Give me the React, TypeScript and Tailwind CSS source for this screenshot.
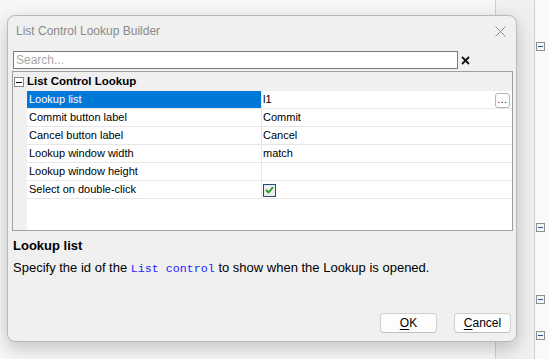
import React from "react";

const rows: { name: string; value?: string; kind?: "check" | "ellipsis" }[] = [
  { name: "Lookup list", value: "l1", kind: "ellipsis" },
  { name: "Commit button label", value: "Commit" },
  { name: "Cancel button label", value: "Cancel" },
  { name: "Lookup window width", value: "match" },
  { name: "Lookup window height", value: "" },
  { name: "Select on double-click", kind: "check" },
];

function TreeMinus({ className }: { className: string }) {
  return (
    <div className={`w-[9px] h-[9px] border border-[#8e8e8e] bg-[#f4f4f4] flex items-center justify-center ${className}`}>
      <div className="w-[5px] h-[1px] bg-[#2f4fa8]" />
    </div>
  );
}

export default function App() {
  return (
    <div className="relative w-[549px] h-[359px] overflow-hidden bg-[#f7f7f7] font-['Liberation_Sans',Arial,sans-serif]">
      {/* background app */}
      <div className="flex h-full">
        <div className="w-[495px] bg-[#f7f7f7]" />
        <div className="w-[40px] border-l border-r border-[#cfcfcf] bg-[#f0f0f0]" />
        <div className="flex-1 bg-[#f9f9f9] flex flex-col pl-[1px]">
          <TreeMinus className="mt-[42px]" />
          <TreeMinus className="mt-[172px]" />
          <TreeMinus className="mt-[63px]" />
          <TreeMinus className="mt-[27px]" />
        </div>
      </div>

      {/* dialog */}
      <div className="absolute left-[7px] top-[15px] w-[510px] h-[327px] rounded-[8px] border border-[#b9b9b9] bg-[#f0f0f0] shadow-[0_6px_18px_rgba(0,0,0,0.22)] flex flex-col">
        <div className="h-[30px] flex items-center justify-between pl-[8px] pr-[10px]">
          <span className="text-[12px] text-[#8a8a8a] leading-none">List Control Lookup Builder</span>
          <svg width="11" height="11" viewBox="0 0 11 11">
            <path d="M0.5 0.5 L10.5 10.5 M10.5 0.5 L0.5 10.5" stroke="#8c8c8c" strokeWidth="1" fill="none" />
          </svg>
        </div>

        {/* search */}
        <div className="mt-[5px] pl-[5px] flex items-center">
          <div className="w-[445px] h-[18px] border border-[#7a7a7a] bg-white flex items-center pl-[2px]">
            <span className="text-[12px] text-[#a8a8a8] leading-none">Search...</span>
          </div>
          <svg className="ml-[3px]" width="9" height="9" viewBox="0 0 9 9">
            <path d="M1 1 L8 8 M8 1 L1 8" stroke="#111" strokeWidth="1.8" fill="none" />
          </svg>
        </div>

        {/* property grid */}
        <div className="mt-[2px] ml-[4px] w-[501px] h-[160px] border border-[#a0a0a0] bg-white flex flex-col">
          <div className="h-[19px] bg-[#f0f0f0] flex items-center pl-[1px] shrink-0">
            <div className="w-[10px] h-[10px] border border-[#8a8a8a] bg-white flex items-center justify-center mt-[1px]">
              <div className="w-[6px] h-[1px] bg-black" />
            </div>
            <span className="ml-[3px] text-[11.5px] font-bold text-black leading-none">List Control Lookup</span>
          </div>
          <div className="flex flex-1">
            <div className="w-[14px] bg-[#f0f0f0]" />
            <div className="flex-1 flex flex-col">
              {rows.map((r, i) => (
                <div key={r.name} className="h-[18px] flex border-b border-[#e6e6e6]">
                  <div
                    className={`w-[234px] pl-[2px] flex items-center text-[11px] leading-none ${
                      i === 0 ? "bg-[#0078d7] text-white" : "text-black"
                    }`}
                  >
                    {r.name}
                  </div>
                  <div className="w-[1px] bg-[#e6e6e6]" />
                  <div className="flex-1 flex items-center justify-between pl-[1px] pr-[2px] text-[11px] leading-none text-black">
                    {r.kind === "check" ? (
                      <div className="w-[13px] h-[13px] border border-[#1c4f7a] bg-[#ececec] flex items-center justify-center mt-[1px]">
                        <svg width="9" height="8" viewBox="0 0 9 8">
                          <path d="M1 4 L3.5 6.5 L8 1.2" stroke="#1f9e2a" strokeWidth="1.8" fill="none" />
                        </svg>
                      </div>
                    ) : (
                      <span>{r.value}</span>
                    )}
                    {r.kind === "ellipsis" && (
                      <div className="w-[15px] h-[15px] mt-[2px] rounded-[3px] border border-[#b5b5b5] bg-white flex items-center justify-center text-[10px] leading-none tracking-[0.5px] text-black pb-[2px]">
                        ...
                      </div>
                    )}
                  </div>
                </div>
              ))}
            </div>
          </div>
        </div>

        {/* description */}
        <div className="ml-[5px] mt-[7px] h-[16px] text-[13px] font-bold leading-[16px] text-black">Lookup list</div>
        <div className="ml-[5px] mt-[6px] h-[16px] text-[13px] leading-[16px] text-black whitespace-nowrap">
          Specify the id of the{" "}
          <span className="font-['Liberation_Mono',monospace] text-[11.67px] text-[#2424ff]">List control</span>{" "}
          to show when the Lookup is opened.
        </div>

        {/* buttons */}
        <div className="mt-auto mb-[8px] pr-[5px] flex justify-end gap-[17px]">
          <div className="w-[57px] h-[20px] rounded-[4px] border border-[#d0d0d0] border-b-[#c0c0c0] bg-[#fdfdfd] flex items-center justify-center text-[12px] leading-none text-black">
            <span><span className="underline underline-offset-2">O</span>K</span>
          </div>
          <div className="w-[57px] h-[20px] rounded-[4px] border border-[#d0d0d0] border-b-[#c0c0c0] bg-[#fdfdfd] flex items-center justify-center text-[12px] leading-none text-black">
            <span><span className="underline underline-offset-2">C</span>ancel</span>
          </div>
        </div>
      </div>
    </div>
  );
}
